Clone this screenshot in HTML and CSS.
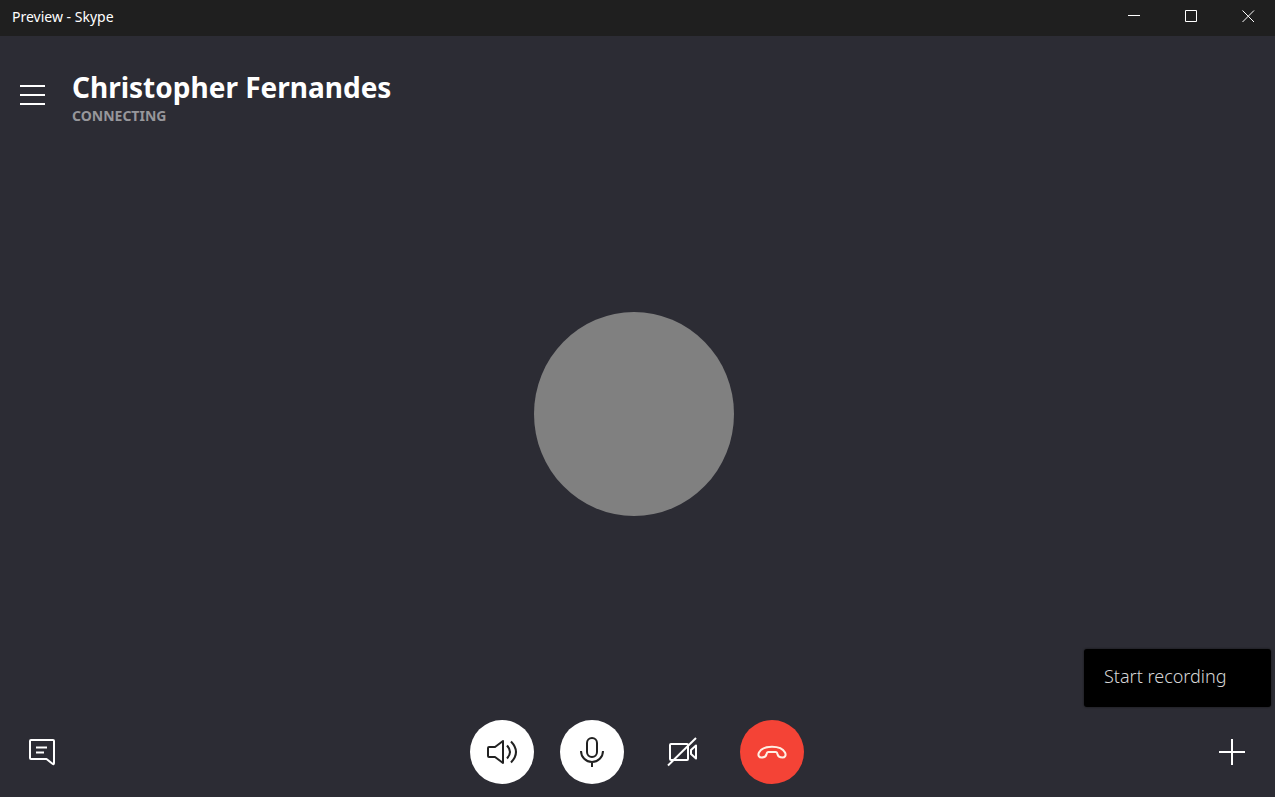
FILE: index.html
```html
<!DOCTYPE html>
<html lang="en">

<head>
    <meta charset="utf-8">
    <meta name="viewport" content="width=device-width, initial-scale=1">
    <title>Preview - Skype</title>
    <link rel="stylesheet" href="styles.css">
</head>

<body>
    <div class="titlebar">
        <span class="titlebar-text">Preview - Skype</span>
        <div class="window-controls">
            <button type="button" aria-label="Minimize">
                <svg width="13" height="13" viewBox="0 0 13 13"><path d="M0 5.500h12" /></svg>
            </button>
            <button type="button" aria-label="Maximize">
                <svg width="13" height="13" viewBox="0 0 13 13"><path d="M.5 .5h11v11h-11z" /></svg>
            </button>
            <button type="button" aria-label="Close">
                <svg width="13" height="13" viewBox="0 0 13 13"><path d="M.5 .5l11.500 11.500M12 .5l-11.500 11.500" /></svg>
            </button>
        </div>
    </div>

    <main class="call">
        <header class="call-header">
            <button type="button" class="menu-button" aria-label="Menu">
                <svg width="26" height="22" viewBox="0 0 26 22"><path d="M0 2h25M0 11h25M0 20h25" /></svg>
            </button>
            <div class="contact">
                <h1>Christopher Fernandes</h1>
                <p>CONNECTING</p>
            </div>
        </header>

        <div class="stage">
            <div class="avatar"></div>
        </div>

        <footer class="toolbar">
            <button type="button" class="tool" aria-label="Chat">
                <svg width="28" height="28" viewBox="0 0 28 28">
                    <path d="M3 2h22q1 0 1 1v22q0 2-1.500 .8L18.500 21H3q-1 0-1-1V3q0-1 1-1z" />
                    <path d="M8 9.500h11M8 14.500h8" />
                </svg>
            </button>

            <div class="call-buttons">
                <button type="button" class="round light" aria-label="Speaker">
                    <svg width="64" height="64" viewBox="0 0 64 64">
                        <path d="M25 27h-6q-1 0-1 1v8q0 1 1 1h6l8 6V21z" />
                        <path d="M37 25.500q6 6.500 0 13M41 21.500q10 10.500 0 21" />
                    </svg>
                </button>
                <button type="button" class="round light" aria-label="Microphone">
                    <svg width="64" height="64" viewBox="0 0 64 64">
                        <rect x="27" y="18" width="10" height="19" rx="5" />
                        <path d="M21 31a11 11 0 0 0 22 0M32 42v5" />
                    </svg>
                </button>
                <button type="button" class="round" aria-label="Turn video on">
                    <svg width="64" height="64" viewBox="0 0 64 64">
                        <path d="M37 24H21q-1 0-1 1v14q0 1 1 1h16q1 0 1-1V25q0-1-1-1z" />
                        <path d="M46 25.500L41 30v4l5 4.500z" />
                        <path d="M18 45.500L46 18" />
                    </svg>
                </button>
                <button type="button" class="round hangup" aria-label="End call">
                    <svg width="64" height="64" viewBox="0 0 64 64">
                        <path d="M32 26.800c-6 0-11 2-13 5.700-1.500 3 .2 5 2.500 5 3.500 0 4.500-.8 5-3.200.3-1.800 1-2.300 2-2.300h7c1 0 1.700.5 2 2.300.5 2.400 1.500 3.200 5 3.200 2.300 0 4-2 2.500-5-2-3.700-7-5.700-13-5.700z" />
                    </svg>
                </button>
            </div>

            <button type="button" class="tool" aria-label="More" aria-expanded="true">
                <svg width="28" height="28" viewBox="0 0 28 28"><path d="M1 14h26M14 1v26" /></svg>
            </button>
            <div class="more-menu">
                <button type="button">Start recording</button>
            </div>
        </footer>
    </main>
</body>

</html>
```
FILE: styles.css
```css
* {
    box-sizing: border-box;
}

body {
    display: flex;
    flex-direction: column;
    min-height: 100vh;
    margin: 0;
    background-color: #2c2c34;
    color: #fff;
    font-family: "Segoe UI", "Noto Sans", sans-serif;
}

h1,
p {
    margin: 0;
}

button {
    display: flex;
    align-items: center;
    justify-content: center;
    padding: 0;
    border: 0;
    background: none;
    color: inherit;
    font: inherit;
}

svg {
    display: block;
    fill: none;
    stroke: currentColor;
    stroke-width: 2;
    stroke-linejoin: round;
}

.titlebar {
    display: flex;
    justify-content: space-between;
    height: 36px;
    padding-left: 12px;
    background-color: #1f1f1f;
}

.titlebar-text {
    font-size: 14px;
    line-height: 34px;
}

.window-controls {
    display: flex;
}

.window-controls button {
    width: 57px;
    height: 32px;
    padding-left: 4px;
}

.window-controls svg {
    stroke-width: 1;
}

.call {
    display: flex;
    flex: 1;
    flex-direction: column;
}

.call-header {
    display: flex;
    align-items: flex-start;
    gap: 26px;
    padding: 32px 20px 0;
}

.contact h1 {
    font-size: 28px;
    line-height: 38px;
}

.contact p {
    color: #97979b;
    font-size: 14px;
    font-weight: 700;
    line-height: 20px;
}

.menu-button {
    height: 54px;
}

.stage {
    display: flex;
    flex: 1;
    align-items: center;
    justify-content: center;
    padding: 0 7px 18px 0;
}

.avatar {
    width: 200px;
    height: 204px;
    border-radius: 50%;
    background-color: #808080;
}

.toolbar {
    position: relative;
    display: flex;
    align-items: center;
    justify-content: space-between;
    padding: 0 29px 13px 28px;
}

.tool {
    width: 28px;
    height: 64px;
}

.call-buttons {
    display: flex;
    gap: 26px;
}

.round {
    width: 64px;
    height: 64px;
    border-radius: 50%;
}

.light {
    background-color: #fff;
    color: #222;
}

.hangup {
    background-color: #f44336;
    color: #fff0e4;
}

.more-menu {
    position: absolute;
    right: 4px;
    bottom: 90px;
    width: 187px;
    border-radius: 3px;
    background-color: #000;
    box-shadow: 0 0 2px #111;
}

.more-menu button {
    width: 100%;
    padding: 14px 20px 18px;
    justify-content: flex-start;
    color: #d6d6d6;
    font-size: 18px;
    font-weight: 300;
    line-height: 26px;
}
```
